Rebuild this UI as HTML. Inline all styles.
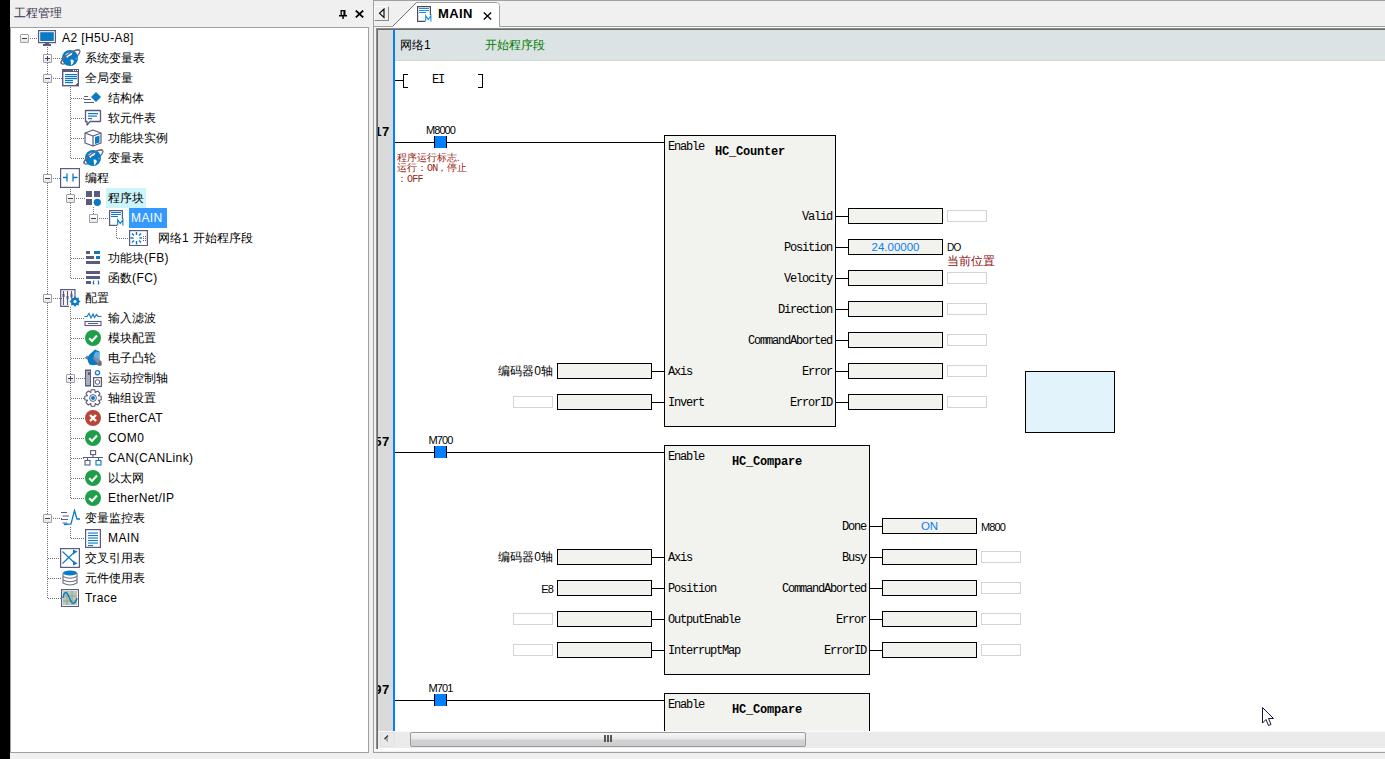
<!DOCTYPE html><html><head><meta charset="utf-8"><style>
*{margin:0;padding:0;box-sizing:border-box}
html,body{width:1385px;height:759px;overflow:hidden;background:#f0f0f0;position:relative;font-family:"Liberation Sans",sans-serif}
.abs{position:absolute}
.t{position:absolute;white-space:nowrap;font-family:"Liberation Sans",sans-serif;font-size:12px;line-height:14px;color:#000}
.m{position:absolute;white-space:nowrap;font-family:"Liberation Mono",monospace;font-size:12px;line-height:12px;letter-spacing:-1.2px;color:#000}
.mb{font-weight:bold;letter-spacing:-0.2px}
.lbl{position:absolute;white-space:nowrap;font-family:"Liberation Sans",sans-serif;font-size:11px;line-height:12px;letter-spacing:-0.9px;color:#000}
.val{position:absolute;white-space:nowrap;font-family:"Liberation Sans",sans-serif;font-size:11.5px;line-height:12px;color:#0a7ff0}
.gn{position:absolute;white-space:nowrap;font-family:"Liberation Mono",monospace;font-size:13px;line-height:14px;font-weight:bold;letter-spacing:0px;color:#000}
.cmt{position:absolute;white-space:nowrap;font-family:"Liberation Sans",sans-serif;font-size:10px;line-height:10px;color:#9b1c10}
.hl{position:absolute;background:#000;height:1px}
.vl{position:absolute;background:#000;width:1px}
.box{position:absolute;background:#f2f2ee;border:1px solid #000}
.sbox{position:absolute;background:#fff;border:1px solid #d4d4d0}
.blk{position:absolute;background:#f2f2ee;border:1px solid #000}
.dh{position:absolute;height:1px;background-image:linear-gradient(to right,#707070 50%,transparent 50%);background-size:2px 1px}
.dv{position:absolute;width:1px;background-image:linear-gradient(to bottom,#707070 50%,transparent 50%);background-size:1px 2px}
.exp{position:absolute;width:9px;height:9px;border:1px solid #a0a0a0;border-radius:1px;background:linear-gradient(#fff,#e6e6e6)}
.exp:before{content:"";position:absolute;left:1px;top:3px;width:5px;height:1px;background:#3c3c6e}
.exp.p:after{content:"";position:absolute;left:3px;top:1px;width:1px;height:5px;background:#3c3c6e}
</style></head><body>
<div class="abs" style="left:0;top:0;width:10px;height:759px;background:#000"></div>
<div class="t" style="left:14px;top:6px;color:#3c3450">工程管理</div>
<div class="abs" style="left:10px;top:27px;width:359px;height:726px;background:#fff;border:1px solid #a0a0a0"></div>
<div class="dv" style="left:47px;top:47px;height:552px"></div>
<div class="dv" style="left:70px;top:87px;height:72px"></div>
<div class="dv" style="left:70px;top:187px;height:92px"></div>
<div class="dv" style="left:93px;top:207px;height:12px"></div>
<div class="dv" style="left:116px;top:227px;height:12px"></div>
<div class="dv" style="left:70px;top:307px;height:192px"></div>
<div class="dv" style="left:70px;top:527px;height:12px"></div>
<div class="dh" style="left:30px;top:38px;width:9px"></div>
<div class="exp" style="left:20px;top:34px"></div>
<svg class="abs" style="left:38px;top:30px" width="18" height="16" viewBox="0 0 18 16"><rect x="0.6" y="0.6" width="16.8" height="12" fill="#0a7ac4" stroke="#5b5b80" stroke-width="1.3"/><rect x="1.7" y="1.7" width="14.6" height="9.8" fill="none" stroke="#fff" stroke-width="1"/><rect x="7" y="12.5" width="4" height="2" fill="#5b5b80"/><rect x="5" y="14" width="8" height="2" fill="#5b5b80"/></svg>
<div class="t" style="left:62px;top:31px"><span style="letter-spacing:0.4px">A2 [H5U-A8]</span></div>
<div class="dh" style="left:53px;top:58px;width:9px"></div>
<div class="exp p" style="left:43px;top:54px"></div>
<svg class="abs" style="left:58px;top:46px" width="26" height="24" viewBox="0 0 26 24"><ellipse cx="12.5" cy="11" rx="11.2" ry="3.6" transform="rotate(-35 12.5 11)" fill="none" stroke="#6a6a82" stroke-width="1.3"/><circle cx="12" cy="12" r="8" fill="#0a7ac4"/><path d="M7.5 8.5 L10 6.8 L14.5 6.8 L13.5 9 L10.5 10.5 L9.5 12 L8 10.5Z M12.5 13.5 L15 13.8 L16 15.5 L14.5 18 L13.2 19.2 L12.8 16Z M17.8 11.5 L18.6 12.8 L17.8 13.5Z" fill="#fff"/><path d="M3.3 17.5 A11.2 3.6 -35 0 1 21.7 4.5" fill="none" stroke="#6a6a82" stroke-width="1.3"/></svg>
<div class="t" style="left:85px;top:51px">系统变量表</div>
<div class="dh" style="left:53px;top:78px;width:9px"></div>
<div class="exp" style="left:43px;top:74px"></div>
<svg class="abs" style="left:62px;top:69px" width="17" height="18" viewBox="0 0 17 18"><rect x="0.7" y="0.7" width="15.6" height="16" fill="#fff" stroke="#5b5b80" stroke-width="1.4"/><rect x="0" y="0" width="17" height="3" fill="#5b5b80"/><rect x="11" y="1" width="1" height="1" fill="#fff"/><rect x="13" y="1" width="1" height="1" fill="#fff"/><rect x="15" y="1" width="1" height="1" fill="#fff"/><rect x="3" y="5" width="12" height="1.2" fill="#0a7ac4"/><rect x="3" y="7" width="12" height="1.2" fill="#0a7ac4"/><rect x="3" y="9" width="12" height="1.2" fill="#0a7ac4"/><rect x="3" y="11" width="8" height="1.2" fill="#0a7ac4"/><rect x="3" y="13" width="8" height="1.2" fill="#0a7ac4"/><path d="M12 17 L17 12 L17 17Z" fill="#5b5b80"/><path d="M13 16 L16 13" stroke="#fff" stroke-width="0.8"/></svg>
<div class="t" style="left:85px;top:71px">全局变量</div>
<div class="dh" style="left:71px;top:98px;width:14px"></div>
<svg class="abs" style="left:84px;top:90px" width="18" height="14" viewBox="0 0 18 14"><rect x="0" y="6" width="4" height="1" fill="#5b5b80"/><rect x="0" y="9" width="7" height="1" fill="#5b5b80"/><rect x="0" y="12" width="10" height="1" fill="#5b5b80"/><path d="M12 2 L17 7 L12 12 L7 7Z" fill="#0a7ac4"/></svg>
<div class="t" style="left:108px;top:91px">结构体</div>
<div class="dh" style="left:71px;top:118px;width:14px"></div>
<svg class="abs" style="left:84px;top:109px" width="18" height="18" viewBox="0 0 18 18"><path d="M1.5 1.5 H16.5 V12.5 H6 L3 16 V12.5 H1.5Z" fill="#fff" stroke="#5b5b80" stroke-width="1.3" stroke-linejoin="round"/><rect x="4" y="4" width="10" height="1.2" fill="#0a7ac4"/><rect x="4" y="6.5" width="9" height="1.2" fill="#0a7ac4"/><rect x="4" y="9" width="4" height="1.2" fill="#0a7ac4"/></svg>
<div class="t" style="left:108px;top:111px">软元件表</div>
<div class="dh" style="left:71px;top:138px;width:14px"></div>
<svg class="abs" style="left:84px;top:129px" width="18" height="18" viewBox="0 0 18 18"><path d="M9 1 L17 4 V14 L9 17 L1 14 V4Z M1 4 L9 7 L17 4 M9 7 V17" fill="#fff" stroke="#5b5b80" stroke-width="1.2" stroke-linejoin="round"/><path d="M11 8 L15.5 6.5 V13.5 L11 15Z" fill="#0a7ac4"/></svg>
<div class="t" style="left:108px;top:131px">功能块实例</div>
<div class="dh" style="left:71px;top:158px;width:14px"></div>
<svg class="abs" style="left:81px;top:146px" width="26" height="24" viewBox="0 0 26 24"><ellipse cx="12.5" cy="11" rx="11.2" ry="3.6" transform="rotate(-35 12.5 11)" fill="none" stroke="#6a6a82" stroke-width="1.3"/><circle cx="12" cy="12" r="8" fill="#0a7ac4"/><path d="M7.5 8.5 L10 6.8 L14.5 6.8 L13.5 9 L10.5 10.5 L9.5 12 L8 10.5Z M12.5 13.5 L15 13.8 L16 15.5 L14.5 18 L13.2 19.2 L12.8 16Z M17.8 11.5 L18.6 12.8 L17.8 13.5Z" fill="#fff"/><path d="M3.3 17.5 A11.2 3.6 -35 0 1 21.7 4.5" fill="none" stroke="#6a6a82" stroke-width="1.3"/></svg>
<div class="t" style="left:108px;top:151px">变量表</div>
<div class="dh" style="left:53px;top:178px;width:9px"></div>
<div class="exp" style="left:43px;top:174px"></div>
<svg class="abs" style="left:60px;top:168px" width="20" height="20" viewBox="0 0 20 20"><rect x="0.6" y="0.6" width="18.8" height="18.8" fill="#fff" stroke="#5b5b80" stroke-width="1.2"/><path d="M3 9.5 H7 M7 5.5 V13.5 M13 5.5 V13.5 M13 9.5 H17.5" stroke="#0a7ac4" stroke-width="1.3" fill="none"/></svg>
<div class="t" style="left:85px;top:171px">编程</div>
<div class="dh" style="left:76px;top:198px;width:9px"></div>
<div class="exp" style="left:66px;top:194px"></div>
<svg class="abs" style="left:86px;top:191px" width="16" height="15" viewBox="0 0 16 15"><rect x="0" y="0" width="6" height="6" fill="#5b5b80"/><rect x="8" y="0" width="6" height="6" fill="#5b5b80"/><rect x="0" y="8" width="6" height="6" fill="#5b5b80"/><circle cx="11.3" cy="11.3" r="3.6" fill="#0a7ac4"/></svg>
<div class="abs" style="left:106px;top:188px;width:40px;height:20px;background:#ccf4fb"></div>
<div class="t" style="left:108px;top:191px">程序块</div>
<div class="dh" style="left:99px;top:218px;width:9px"></div>
<div class="exp" style="left:89px;top:214px"></div>
<svg class="abs" style="left:109px;top:210px" width="15" height="16" viewBox="0 0 15 16"><path d="M8 15.4 H0.6 V0.6 H13.4 V9" fill="none" stroke="#5b5b80" stroke-width="1.2"/><rect x="2" y="2" width="10" height="1" fill="#0a7ac4"/><rect x="2" y="4" width="10" height="1" fill="#0a7ac4"/><rect x="2" y="6" width="7" height="1" fill="#0a7ac4"/><path d="M8.7 15.5 V9.8 L11.3 13.5 L13.9 9.8 V15.5" fill="none" stroke="#0a7ac4" stroke-width="1.1"/></svg>
<div class="abs" style="left:129px;top:208px;width:38px;height:20px;background:#3399ff"></div>
<div class="t" style="left:131px;top:211px;color:#fff"><span style="letter-spacing:0.4px">MAIN</span></div>
<div class="dh" style="left:117px;top:238px;width:14px"></div>
<svg class="abs" style="left:129px;top:230px" width="19" height="16" viewBox="0 0 19 16"><rect x="0.6" y="0.6" width="17.8" height="15" fill="#fff" stroke="#5b5b80" stroke-width="1.2"/><g stroke="#0a7ac4" stroke-width="1.4"><path d="M7.5 2 V5 M7.5 11 V14.5 M1.5 8 H4.5 M10.5 8 H13 M3 3.5 L5 5.5 M12 3.5 L10 5.5 M3 12.5 L5 10.5 M12 12.5 L10 10.5"/></g><g fill="#5b5b80"><rect x="14" y="6" width="1" height="1"/><rect x="16" y="6" width="1" height="1"/><rect x="14" y="8" width="1" height="1"/><rect x="16" y="8" width="1" height="1"/><rect x="14" y="10" width="1" height="1"/><rect x="16" y="10" width="1" height="1"/></g></svg>
<div class="t" style="left:158px;top:231px">网络<span style="letter-spacing:0.4px">1 </span>开始程序段</div>
<div class="dh" style="left:71px;top:258px;width:14px"></div>
<svg class="abs" style="left:86px;top:251px" width="15" height="14" viewBox="0 0 15 14"><rect x="0" y="0" width="4" height="3" fill="#5b5b80"/><rect x="8" y="0" width="6" height="3" fill="#0a7ac4"/><rect x="0" y="5" width="8" height="3" fill="#5b5b80"/><rect x="10" y="5" width="4" height="3" fill="#0a7ac4"/><rect x="0" y="10" width="14" height="3" fill="#5b5b80"/></svg>
<div class="t" style="left:108px;top:251px">功能块<span style="letter-spacing:0.4px">(FB)</span></div>
<div class="dh" style="left:71px;top:278px;width:14px"></div>
<svg class="abs" style="left:86px;top:271px" width="15" height="15" viewBox="0 0 15 15"><rect x="0" y="0" width="14" height="3" fill="#5b5b80"/><rect x="0" y="5" width="14" height="3" fill="#5b5b80"/><rect x="0" y="10" width="5" height="3" fill="#5b5b80"/><path d="M8 9.5 Q6.5 11.5 8 13.5 M12 9.5 Q13.5 11.5 12 13.5" fill="none" stroke="#0a7ac4" stroke-width="1.2"/></svg>
<div class="t" style="left:108px;top:271px">函数<span style="letter-spacing:0.4px">(FC)</span></div>
<div class="dh" style="left:53px;top:298px;width:9px"></div>
<div class="exp" style="left:43px;top:294px"></div>
<svg class="abs" style="left:60px;top:289px" width="21" height="19" viewBox="0 0 21 19"><path d="M15 11 V0.7 H0.7 V17.3 H9" fill="none" stroke="#5b5b80" stroke-width="1.2"/><g stroke="#5b5b80" stroke-width="1.2"><path d="M3.5 2 V16 M7.5 2 V16 M11.5 2 V9"/></g><g fill="#5b5b80"><rect x="2.5" y="5" width="2" height="3"/><rect x="6.5" y="7" width="2" height="3"/><rect x="10.5" y="5" width="2" height="3"/></g><polygon points="20.60,12.50 18.60,13.99 18.96,16.46 16.49,16.10 15.00,18.10 13.51,16.10 11.04,16.46 11.40,13.99 9.40,12.50 11.40,11.01 11.04,8.54 13.51,8.90 15.00,6.90 16.49,8.90 18.96,8.54 18.60,11.01" fill="#0a7ac4"/><circle cx="15" cy="12.5" r="3.8" fill="#0a7ac4"/><circle cx="15" cy="12.5" r="1.6" fill="#fff"/></svg>
<div class="t" style="left:85px;top:291px">配置</div>
<div class="dh" style="left:71px;top:318px;width:14px"></div>
<svg class="abs" style="left:84px;top:310px" width="18" height="17" viewBox="0 0 18 17"><path d="M0.5 6.5 H3 L5 3.5 L7 8 L9 4 L10.5 7.5 L12.5 4.5 L14 6.5 H17.5" fill="none" stroke="#0a7ac4" stroke-width="1.1"/><rect x="1" y="11.5" width="16" height="4" fill="#fff" stroke="#5b5b80" stroke-width="1.1"/><rect x="4" y="13" width="10" height="1" fill="#5b5b80"/></svg>
<div class="t" style="left:108px;top:311px">输入滤波</div>
<div class="dh" style="left:71px;top:338px;width:14px"></div>
<svg class="abs" style="left:85px;top:330px" width="16" height="16" viewBox="0 0 16 16"><circle cx="8" cy="8" r="8" fill="#1e9e4a"/><path d="M4.2 8.2 L7 11 L12 5.5" fill="none" stroke="#fff" stroke-width="2"/></svg>
<div class="t" style="left:108px;top:331px">模块配置</div>
<div class="dh" style="left:71px;top:358px;width:14px"></div>
<svg class="abs" style="left:84px;top:349px" width="18" height="18" viewBox="0 0 18 18"><path d="M0.5 9 L3 6.5 L17 14 L15 17Z" fill="#7e7e8e"/><path d="M11 0.5 L15.5 2.5 V14.5 Q10 17.5 5.5 15.5 Q2 11 5 6Z" fill="#0a7ac4"/><path d="M12 2.5 L15 3.5 V13 Q12.5 10 10 9 Q9 6 12 2.5Z" fill="#62b2e8"/><path d="M8.5 9.5 L11 8 L17.5 12 L16 16.5 Z" fill="#8a8a98"/><ellipse cx="16" cy="14.5" rx="1.8" ry="2.5" fill="#6e6e7e"/></svg>
<div class="t" style="left:108px;top:351px">电子凸轮</div>
<div class="dh" style="left:76px;top:378px;width:9px"></div>
<div class="exp p" style="left:66px;top:374px"></div>
<svg class="abs" style="left:84px;top:369px" width="18" height="18" viewBox="0 0 18 18"><rect x="1" y="0.5" width="6" height="17" fill="#5b5b80"/><rect x="2.5" y="2" width="1" height="14" fill="#fff"/><rect x="4.5" y="6" width="1" height="10" fill="#fff"/><rect x="4.5" y="2" width="1.2" height="1.2" fill="#fff"/><rect x="9.6" y="8.6" width="7.8" height="8.8" fill="#fff" stroke="#5b5b80" stroke-width="1.2"/><circle cx="13.5" cy="13" r="2.3" fill="none" stroke="#5b5b80" stroke-width="1"/><circle cx="13.5" cy="3.8" r="2.1" fill="none" stroke="#0a7ac4" stroke-width="1.3"/></svg>
<div class="t" style="left:108px;top:371px">运动控制轴</div>
<div class="dh" style="left:71px;top:398px;width:14px"></div>
<svg class="abs" style="left:84px;top:389px" width="18" height="18" viewBox="0 0 18 18"><polygon points="14.48,6.55 17.23,7.33 17.23,10.67 14.48,11.45 14.60,11.14 16.00,13.64 13.64,16.00 11.14,14.60 11.45,14.48 10.67,17.23 7.33,17.23 6.55,14.48 6.86,14.60 4.36,16.00 2.00,13.64 3.40,11.14 3.52,11.45 0.77,10.67 0.77,7.33 3.52,6.55 3.40,6.86 2.00,4.36 4.36,2.00 6.86,3.40 6.55,3.52 7.33,0.77 10.67,0.77 11.45,3.52 11.14,3.40 13.64,2.00 16.00,4.36 14.60,6.86" fill="#fff" stroke="#5b5b80" stroke-width="1.1" stroke-linejoin="round"/><circle cx="9" cy="9" r="3.4" fill="#fff" stroke="#5b5b80" stroke-width="1"/><circle cx="9" cy="9" r="2" fill="#0a7ac4"/></svg>
<div class="t" style="left:108px;top:391px">轴组设置</div>
<div class="dh" style="left:71px;top:418px;width:14px"></div>
<svg class="abs" style="left:85px;top:410px" width="16" height="16" viewBox="0 0 16 16"><circle cx="8" cy="8" r="8" fill="#b9453a"/><path d="M5 5 L11 11 M11 5 L5 11" fill="none" stroke="#fff" stroke-width="2.4"/></svg>
<div class="t" style="left:108px;top:411px"><span style="letter-spacing:0.4px">EtherCAT</span></div>
<div class="dh" style="left:71px;top:438px;width:14px"></div>
<svg class="abs" style="left:85px;top:430px" width="16" height="16" viewBox="0 0 16 16"><circle cx="8" cy="8" r="8" fill="#1e9e4a"/><path d="M4.2 8.2 L7 11 L12 5.5" fill="none" stroke="#fff" stroke-width="2"/></svg>
<div class="t" style="left:108px;top:431px"><span style="letter-spacing:0.4px">COM0</span></div>
<div class="dh" style="left:71px;top:458px;width:14px"></div>
<svg class="abs" style="left:83px;top:450px" width="20" height="16" viewBox="0 0 20 16"><rect x="7.6" y="0.6" width="5" height="4" fill="#fff" stroke="#5b5b80" stroke-width="1.1"/><path d="M10 4.6 V7.5 M0 7.5 H20 M4.5 7.5 V10 M15.5 7.5 V10" stroke="#5b5b80" stroke-width="1.1" fill="none"/><rect x="2" y="10.5" width="5" height="4.5" fill="#fff" stroke="#5b5b80" stroke-width="1.1"/><rect x="13" y="10.5" width="5" height="4.5" fill="#fff" stroke="#0a7ac4" stroke-width="1.1"/></svg>
<div class="t" style="left:108px;top:451px"><span style="letter-spacing:0.4px">CAN(CANLink)</span></div>
<div class="dh" style="left:71px;top:478px;width:14px"></div>
<svg class="abs" style="left:85px;top:470px" width="16" height="16" viewBox="0 0 16 16"><circle cx="8" cy="8" r="8" fill="#1e9e4a"/><path d="M4.2 8.2 L7 11 L12 5.5" fill="none" stroke="#fff" stroke-width="2"/></svg>
<div class="t" style="left:108px;top:471px">以太网</div>
<div class="dh" style="left:71px;top:498px;width:14px"></div>
<svg class="abs" style="left:85px;top:490px" width="16" height="16" viewBox="0 0 16 16"><circle cx="8" cy="8" r="8" fill="#1e9e4a"/><path d="M4.2 8.2 L7 11 L12 5.5" fill="none" stroke="#fff" stroke-width="2"/></svg>
<div class="t" style="left:108px;top:491px"><span style="letter-spacing:0.4px">EtherNet/IP</span></div>
<div class="dh" style="left:53px;top:518px;width:9px"></div>
<div class="exp" style="left:43px;top:514px"></div>
<svg class="abs" style="left:61px;top:509px" width="20" height="17" viewBox="0 0 20 17"><g stroke="#5b5b80" stroke-width="1"><path d="M0 3.5 H6 M1.5 7 H8 M0 10.5 H7 M1.5 14 H6"/></g><path d="M3 15.5 L10 15 L13.5 1.5 L16 10 H19" fill="none" stroke="#0a7ac4" stroke-width="1.3"/></svg>
<div class="t" style="left:85px;top:511px">变量监控表</div>
<div class="dh" style="left:71px;top:538px;width:14px"></div>
<svg class="abs" style="left:85px;top:529px" width="16" height="19" viewBox="0 0 16 19"><rect x="0.6" y="0.6" width="14.8" height="17.8" fill="#fff" stroke="#5b5b80" stroke-width="1.2"/><rect x="3" y="3.5" width="10" height="1.1" fill="#0a7ac4"/><rect x="3" y="6" width="10" height="1.1" fill="#0a7ac4"/><rect x="3" y="8.5" width="10" height="1.1" fill="#0a7ac4"/><rect x="3" y="11" width="10" height="1.1" fill="#0a7ac4"/><rect x="3" y="13.5" width="10" height="1.1" fill="#0a7ac4"/><rect x="3" y="16" width="5" height="1.1" fill="#0a7ac4"/></svg>
<div class="t" style="left:108px;top:531px"><span style="letter-spacing:0.4px">MAIN</span></div>
<div class="dh" style="left:48px;top:558px;width:14px"></div>
<svg class="abs" style="left:60px;top:548px" width="20" height="20" viewBox="0 0 20 20"><rect x="0.6" y="0.6" width="18.8" height="18.8" fill="#fff" stroke="#5b5b80" stroke-width="1.2"/><path d="M2.5 3.5 L15 15.5 M2.5 15.5 L15 3.5" fill="none" stroke="#0a7ac4" stroke-width="1.1"/><path d="M13 1.5 L17.5 3.5 L13 6.5Z M13 12.5 L17.5 15.5 L13 17.5Z" fill="#0a7ac4"/></svg>
<div class="t" style="left:85px;top:551px">交叉引用表</div>
<div class="dh" style="left:48px;top:578px;width:14px"></div>
<svg class="abs" style="left:62px;top:570px" width="16" height="17" viewBox="0 0 16 17"><path d="M1 3 V13 Q8 17 15 13 V3" fill="#fff" stroke="#6e6e7e" stroke-width="1.1"/><path d="M1 6.5 Q8 10 15 6.5 M1 10 Q8 13.5 15 10" fill="none" stroke="#6e6e7e" stroke-width="1.1"/><ellipse cx="8" cy="3" rx="7" ry="2.6" fill="#0a7ac4"/></svg>
<div class="t" style="left:85px;top:571px">元件使用表</div>
<div class="dh" style="left:48px;top:598px;width:14px"></div>
<svg class="abs" style="left:61px;top:589px" width="18" height="18" viewBox="0 0 18 18"><rect x="0.6" y="0.6" width="17" height="17" fill="#fff" stroke="#5b5b80" stroke-width="1.2"/><rect x="2" y="2" width="14.2" height="14.2" fill="#b8c8b8"/><g stroke="#8fa08f" stroke-width="0.8"><path d="M6 2 V16 M11 2 V16 M2 7 H16 M2 12 H16"/></g><path d="M2 9 C3 2 6 2 8.5 9 C11 16 14 16 16 9" fill="none" stroke="#0a7ac4" stroke-width="1.4"/></svg>
<div class="t" style="left:85px;top:591px"><span style="letter-spacing:0.4px">Trace</span></div>
<div class="abs" style="left:373px;top:0;width:1012px;height:753px;border-left:1px solid #a0a0a0;border-top:1px solid #a0a0a0;border-bottom:1px solid #a0a0a0"></div>
<div class="abs" style="left:376px;top:28px;width:1009px;height:721px;border-left:1px solid #8c8c8c;border-top:1px solid #8c8c8c"></div>
<div class="abs" style="left:377px;top:29px;width:1008px;height:720px;border-left:1px solid #6a6a6a;border-top:1px solid #6a6a6a;background:#fff"></div>
<div class="abs" style="left:378px;top:30px;width:15px;height:701px;background:#dadada"></div>
<div class="abs" style="left:393px;top:30px;width:2px;height:701px;background:#0080ff"></div>
<div class="abs" style="left:395px;top:30px;width:990px;height:31px;background:#dce3e5;border-bottom:1px solid #d4d6d2"></div>
<div class="t" style="left:400px;top:38px">网络1</div>
<div class="t" style="left:485px;top:38px;color:#008000">开始程序段</div>
<div class="abs" style="left:378px;top:61px;width:1007px;height:671px;overflow:hidden">
<div class="abs" style="left:-378px;top:-61px;width:1385px;height:759px">
<div class="gn" style="left:374px;top:126px">17</div>
<div class="gn" style="left:374px;top:436px">57</div>
<div class="gn" style="left:374px;top:684px">97</div>
<div class="hl" style="left:395px;top:80px;width:9px"></div>
<div class="abs" style="left:403px;top:74px;width:5px;height:14px;border:1px solid #000;border-right:none"></div>
<div class="abs" style="left:478px;top:74px;width:5px;height:14px;border:1px solid #000;border-left:none"></div>
<div class="m" style="left:432px;top:74px;">EI</div>
<div class="hl" style="left:395px;top:142px;width:269px"></div>
<div class="abs" style="left:434px;top:136px;width:13px;height:12px;background:#0080ff;border-left:1px solid #000;border-right:1px solid #000"></div>
<div class="lbl" style="left:400px;top:124px;width:81px;text-align:center">M8000</div>
<div class="cmt" style="left:397px;top:153px">程序运行标志.<br>运行：<span style="font-family:Liberation Mono,monospace;font-size:10px;letter-spacing:-0.8px">ON</span>，停止<br>：<span style="font-family:Liberation Mono,monospace;font-size:10px;letter-spacing:-0.8px">OFF</span></div>
<div class="blk" style="left:664px;top:135px;width:172px;height:292px;"></div>
<div class="m" style="left:668px;top:141px;">Enable</div>
<div class="m mb" style="left:715px;top:146px;">HC_Counter</div>
<div class="m" style="right:553px;top:211px;">Valid</div>
<div class="hl" style="left:836px;top:216px;width:13px"></div>
<div class="box" style="left:848px;top:208px;width:95px;height:16px;"></div>
<div class="sbox" style="left:947px;top:210px;width:40px;height:12px;"></div>
<div class="m" style="right:553px;top:242px;">Position</div>
<div class="hl" style="left:836px;top:247px;width:13px"></div>
<div class="box" style="left:848px;top:239px;width:95px;height:16px;"></div>
<div class="val" style="left:849px;top:241px;width:93px;text-align:center">24.00000</div>
<div class="lbl" style="left:947px;top:242px;font-size:10px;letter-spacing:-0.6px">DO</div>
<div class="t" style="left:947px;top:254px;color:#8e0c0c">当前位置</div>
<div class="m" style="right:553px;top:273px;">Velocity</div>
<div class="hl" style="left:836px;top:278px;width:13px"></div>
<div class="box" style="left:848px;top:270px;width:95px;height:16px;"></div>
<div class="sbox" style="left:947px;top:272px;width:40px;height:12px;"></div>
<div class="m" style="right:553px;top:304px;">Direction</div>
<div class="hl" style="left:836px;top:309px;width:13px"></div>
<div class="box" style="left:848px;top:301px;width:95px;height:16px;"></div>
<div class="sbox" style="left:947px;top:303px;width:40px;height:12px;"></div>
<div class="m" style="right:553px;top:335px;">CommandAborted</div>
<div class="hl" style="left:836px;top:340px;width:13px"></div>
<div class="box" style="left:848px;top:332px;width:95px;height:16px;"></div>
<div class="sbox" style="left:947px;top:334px;width:40px;height:12px;"></div>
<div class="m" style="right:553px;top:366px;">Error</div>
<div class="hl" style="left:836px;top:371px;width:13px"></div>
<div class="box" style="left:848px;top:363px;width:95px;height:16px;"></div>
<div class="sbox" style="left:947px;top:365px;width:40px;height:12px;"></div>
<div class="m" style="right:553px;top:397px;">ErrorID</div>
<div class="hl" style="left:836px;top:402px;width:13px"></div>
<div class="box" style="left:848px;top:394px;width:95px;height:16px;"></div>
<div class="sbox" style="left:947px;top:396px;width:40px;height:12px;"></div>
<div class="m" style="left:668px;top:366px;">Axis</div>
<div class="hl" style="left:652px;top:371px;width:12px"></div>
<div class="box" style="left:557px;top:363px;width:95px;height:16px;"></div>
<div class="t" style="right:832px;top:364px;">编码器0轴</div>
<div class="m" style="left:668px;top:397px;">Invert</div>
<div class="hl" style="left:652px;top:402px;width:12px"></div>
<div class="box" style="left:557px;top:394px;width:95px;height:16px;"></div>
<div class="sbox" style="left:513px;top:396px;width:40px;height:12px;"></div>
<div class="box" style="left:1025px;top:371px;width:90px;height:62px;background:#e3f3fc"></div>
<div class="hl" style="left:395px;top:452px;width:269px"></div>
<div class="abs" style="left:434px;top:446px;width:13px;height:12px;background:#0080ff;border-left:1px solid #000;border-right:1px solid #000"></div>
<div class="lbl" style="left:400px;top:434px;width:81px;text-align:center">M700</div>
<div class="blk" style="left:664px;top:445px;width:206px;height:230px;"></div>
<div class="m" style="left:668px;top:451px;">Enable</div>
<div class="m mb" style="left:732px;top:456px;">HC_Compare</div>
<div class="m" style="right:519px;top:521px;">Done</div>
<div class="hl" style="left:870px;top:526px;width:13px"></div>
<div class="box" style="left:882px;top:518px;width:95px;height:16px;"></div>
<div class="val" style="left:883px;top:520px;width:93px;text-align:center">ON</div>
<div class="lbl" style="left:981px;top:521px;">M800</div>
<div class="m" style="right:519px;top:552px;">Busy</div>
<div class="hl" style="left:870px;top:557px;width:13px"></div>
<div class="box" style="left:882px;top:549px;width:95px;height:16px;"></div>
<div class="sbox" style="left:981px;top:551px;width:40px;height:12px;"></div>
<div class="m" style="right:519px;top:583px;">CommandAborted</div>
<div class="hl" style="left:870px;top:588px;width:13px"></div>
<div class="box" style="left:882px;top:580px;width:95px;height:16px;"></div>
<div class="sbox" style="left:981px;top:582px;width:40px;height:12px;"></div>
<div class="m" style="right:519px;top:614px;">Error</div>
<div class="hl" style="left:870px;top:619px;width:13px"></div>
<div class="box" style="left:882px;top:611px;width:95px;height:16px;"></div>
<div class="sbox" style="left:981px;top:613px;width:40px;height:12px;"></div>
<div class="m" style="right:519px;top:645px;">ErrorID</div>
<div class="hl" style="left:870px;top:650px;width:13px"></div>
<div class="box" style="left:882px;top:642px;width:95px;height:16px;"></div>
<div class="sbox" style="left:981px;top:644px;width:40px;height:12px;"></div>
<div class="m" style="left:668px;top:552px;">Axis</div>
<div class="hl" style="left:652px;top:557px;width:12px"></div>
<div class="box" style="left:557px;top:549px;width:95px;height:16px;"></div>
<div class="t" style="right:832px;top:550px;">编码器0轴</div>
<div class="m" style="left:668px;top:583px;">Position</div>
<div class="hl" style="left:652px;top:588px;width:12px"></div>
<div class="box" style="left:557px;top:580px;width:95px;height:16px;"></div>
<div class="lbl" style="right:832px;top:583px;">E8</div>
<div class="m" style="left:668px;top:614px;">OutputEnable</div>
<div class="hl" style="left:652px;top:619px;width:12px"></div>
<div class="box" style="left:557px;top:611px;width:95px;height:16px;"></div>
<div class="sbox" style="left:513px;top:613px;width:40px;height:12px;"></div>
<div class="m" style="left:668px;top:645px;">InterruptMap</div>
<div class="hl" style="left:652px;top:650px;width:12px"></div>
<div class="box" style="left:557px;top:642px;width:95px;height:16px;"></div>
<div class="sbox" style="left:513px;top:644px;width:40px;height:12px;"></div>
<div class="hl" style="left:395px;top:700px;width:269px"></div>
<div class="abs" style="left:434px;top:694px;width:13px;height:12px;background:#0080ff;border-left:1px solid #000;border-right:1px solid #000"></div>
<div class="lbl" style="left:400px;top:682px;width:81px;text-align:center">M701</div>
<div class="blk" style="left:664px;top:693px;width:206px;height:67px;"></div>
<div class="m" style="left:668px;top:699px;">Enable</div>
<div class="m mb" style="left:732px;top:704px;">HC_Compare</div>
</div></div>
<div class="abs" style="left:378px;top:731px;width:1007px;height:1px;background:#fafafa"></div>
<div class="abs" style="left:378px;top:732px;width:1007px;height:16px;background:#ebebeb"></div>
<div class="abs" style="left:380px;top:732px;width:15px;height:15px;background:#e9e9e9;border:1px solid #e2e2e2"></div>
<svg class="abs" style="left:383px;top:735px" width="7" height="10" viewBox="0 0 7 10"><path d="M5 0.5 L1.5 4 L5 7.5Z" fill="#a8a8b4"/><path d="M5 0.5 L1.5 4" stroke="#303040" stroke-width="1.1"/></svg>
<div class="abs" style="left:410px;top:732px;width:396px;height:15px;border:1px solid #9a9a9e;border-radius:2px;background:linear-gradient(#f6f6f6 0%,#e8e8e8 45%,#d2d2d4 55%,#cfcfd2 100%)"></div>
<div class="abs" style="left:604px;top:735px;width:2px;height:7px;background:#555"></div><div class="abs" style="left:607px;top:735px;width:2px;height:7px;background:#555"></div><div class="abs" style="left:610px;top:735px;width:2px;height:7px;background:#555"></div>
<div class="abs" style="left:374px;top:749px;width:1011px;height:2px;background:#fcfcfc"></div>
<div class="abs" style="left:374px;top:752px;width:1011px;height:1px;background:#a0a0a0"></div>
<svg class="abs" style="left:373px;top:0" width="1012" height="29" viewBox="0 0 1012 29"><rect x="0" y="0" width="1012" height="1" fill="#a0a0a0"/><path d="M0 26.5 H19.5 L43.5 2.5 H123 Q126.5 2.5 126.5 6 V26.5 H1012" fill="none" stroke="#a0a0a0" stroke-width="1"/><path d="M20 27 L44 3 H123 Q126 3 126 6 V27Z" fill="#fff"/><path d="M19.5 26.5 L43.5 2.5" stroke="#707070" stroke-width="1"/><rect x="1" y="27" width="1011" height="1" fill="#f8f8f8"/></svg>
<div class="abs" style="left:374px;top:6px;width:15px;height:15px;background:#efefef;border-top:1px solid #fff;border-left:1px solid #fff;border-right:1px solid #8a8a8a;border-bottom:1px solid #8a8a8a"></div>
<svg class="abs" style="left:378px;top:8px" width="8" height="11" viewBox="0 0 8 11"><path d="M6 1 V9.5 L1.5 5.3Z" fill="none" stroke="#000" stroke-width="1.1" stroke-linejoin="miter"/></svg>
<svg class="abs" style="left:417px;top:6px" width="15" height="16" viewBox="0 0 15 16"><path d="M8 15.4 H0.6 V0.6 H13.4 V9" fill="none" stroke="#4e4a5e" stroke-width="1.2"/><rect x="2" y="2" width="10" height="1" fill="#1a8ee0"/><rect x="2" y="4" width="10" height="1" fill="#1a8ee0"/><rect x="2" y="6" width="7" height="1" fill="#1a8ee0"/><path d="M8.7 15.5 V9.8 L11.3 13.5 L13.9 9.8 V15.5" fill="none" stroke="#1a8ee0" stroke-width="1.1"/></svg>
<div class="t" style="left:438px;top:6px;font-size:13px;font-weight:bold;line-height:15px;letter-spacing:0.4px">MAIN</div>
<svg class="abs" style="left:483px;top:12px" width="9" height="8" viewBox="0 0 9 8"><path d="M0.8 0.5 L8.2 7.5 M8.2 0.5 L0.8 7.5" stroke="#000" stroke-width="1.3"/></svg>
<svg class="abs" style="left:339px;top:10px" width="8" height="9" viewBox="0 0 8 9"><path d="M1.5 0 H6.5 V6 H1.5Z" fill="#000"/><rect x="2.8" y="1.3" width="1.6" height="3.6" fill="#f0f0f0"/><rect x="0" y="5" width="8" height="1.5" fill="#000"/><rect x="3.3" y="6" width="1.5" height="3" fill="#000"/></svg>
<svg class="abs" style="left:355px;top:10px" width="9" height="8" viewBox="0 0 9 8"><path d="M0.8 0.6 L8.2 7.4 M8.2 0.6 L0.8 7.4" stroke="#000" stroke-width="1.8"/></svg>
<svg class="abs" style="left:1262px;top:707px" width="13" height="20" viewBox="0 0 13 20"><path d="M0.5 0.5 V16 L4 12.5 L6.5 18.5 L9 17.5 L6.5 11.5 H11.5Z" fill="#fff" stroke="#1a1438" stroke-width="1" stroke-linejoin="round"/></svg>
</body></html>
